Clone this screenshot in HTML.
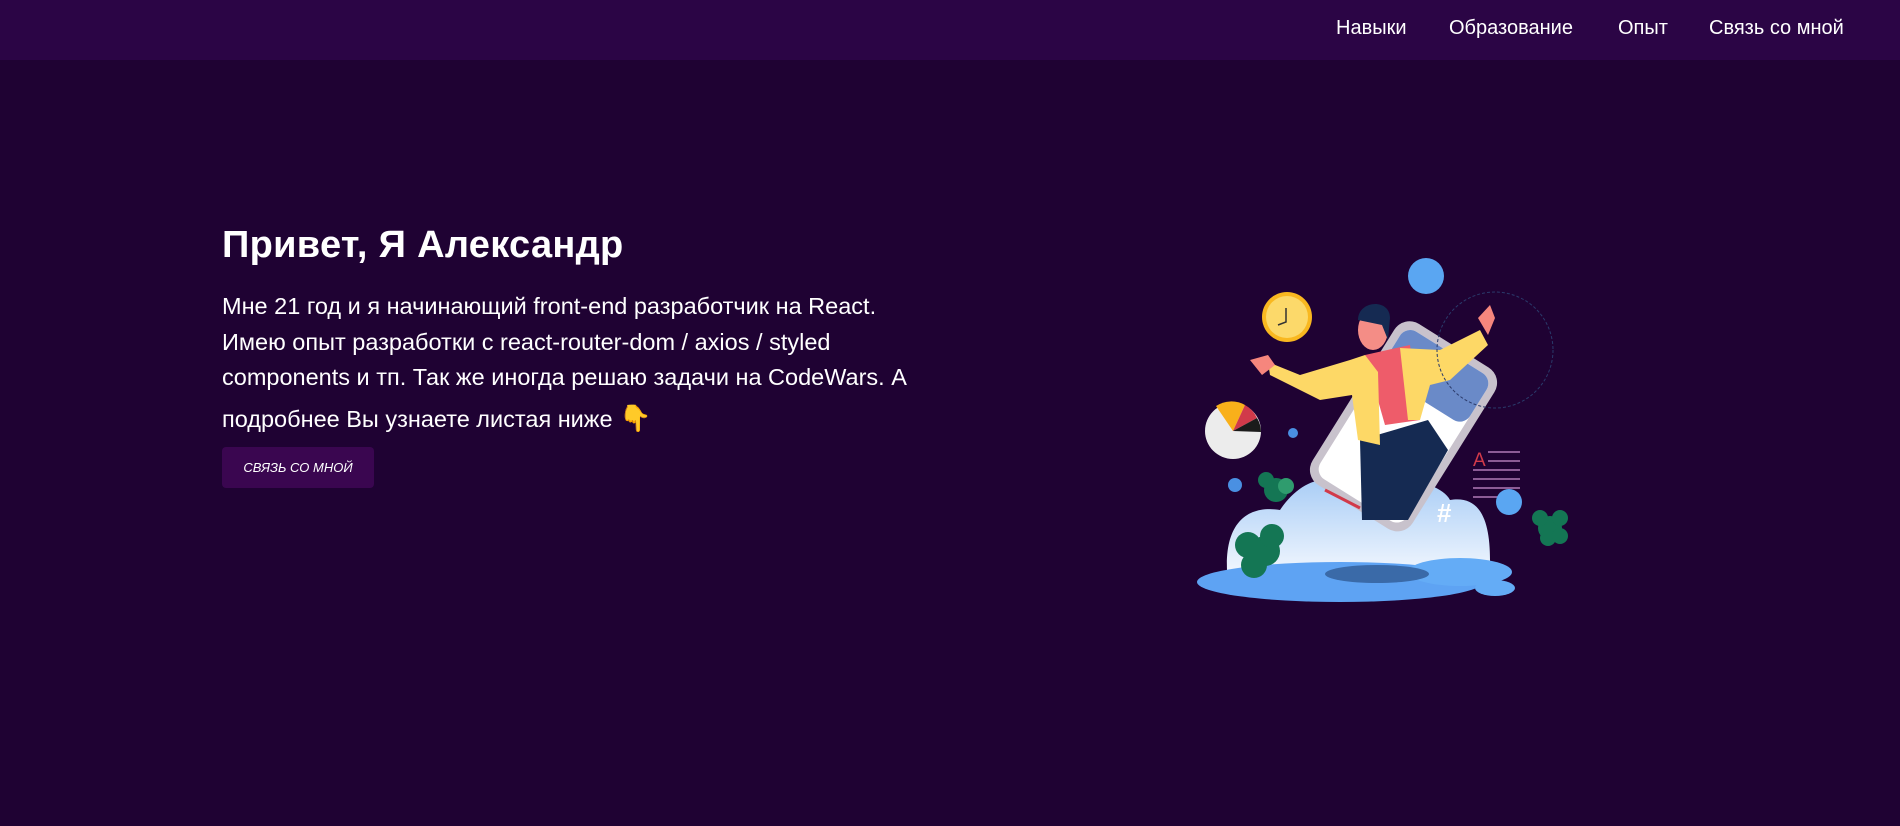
<!DOCTYPE html>
<html><head><meta charset="utf-8"><style>
html,body{margin:0;padding:0;}
body{width:1900px;height:826px;background:#1f0233;font-family:"Liberation Sans","DejaVu Sans",sans-serif;color:#fff;position:relative;overflow:hidden;}
.nav{position:absolute;left:0;top:0;width:1900px;height:60px;background:#2b0545;}
.nav span{position:absolute;top:17px;font-size:20px;color:#fff;}
h1{position:absolute;left:222px;top:224px;margin:0;font-size:38px;font-weight:bold;letter-spacing:0.3px;}
p{position:absolute;left:222px;top:289px;margin:0;width:760px;font-size:23.5px;line-height:35.5px;white-space:nowrap;}
.btn{position:absolute;left:222px;top:447px;width:152px;height:41px;background:#3a0650;border-radius:4px;font-size:13px;line-height:41px;text-align:center;font-style:italic;}
svg{position:absolute;left:0;top:0;}
</style></head><body>
<div class="nav">
<span style="left:1336px">Навыки</span>
<span style="left:1449px">Образование</span>
<span style="left:1618px">Опыт</span>
<span style="left:1709px">Связь со мной</span>
</div>
<h1>Привет, Я Александр</h1>
<p>Мне 21 год и я начинающий front-end разработчик на React.<br>Имею опыт разработки с react-router-dom / axios / styled<br>components и тп. Так же иногда решаю задачи на CodeWars. А<br><span style="line-height:44px">подробнее Вы узнаете листая ниже <span style="color:#f5b90c;font-size:26px">👇</span></span></p>
<div class="btn">СВЯЗЬ СО МНОЙ</div>
<svg width="1900" height="826" viewBox="0 0 1900 826">
<defs><linearGradient id="cl" x1="0" y1="0" x2="0" y2="1"><stop offset="0" stop-color="#a9cdf6"/><stop offset="1" stop-color="#f2f7fe"/></linearGradient></defs>
<circle cx="1426" cy="276" r="18" fill="#5aa6f2"/>
<circle cx="1287" cy="317" r="25" fill="#f9b820"/><circle cx="1287" cy="317" r="21" fill="#fcd96a"/>
<path d="M1286 308 L1286 322 L1278 325" stroke="#333" stroke-width="1.5" fill="none"/>
<circle cx="1233" cy="431" r="28" fill="#ececec"/>
<path d="M1233 431 L1216 406 A28 28 0 0 1 1245 405Z" fill="#f9b01a"/>
<path d="M1233 431 L1245 405 A28 28 0 0 1 1257 418Z" fill="#d13a4a"/>
<path d="M1233 431 L1257 418 A28 28 0 0 1 1261 432Z" fill="#1b1b1b"/>
<circle cx="1293" cy="433" r="5" fill="#4a90e2"/>
<circle cx="1235" cy="485" r="7" fill="#4a90e2"/>
<circle cx="1311" cy="512" r="8" fill="#2c6fd1"/>
<path d="M1227 570 C1225 520 1250 505 1280 510 C1300 480 1330 470 1350 490 C1380 470 1440 480 1450 500 C1480 495 1490 520 1490 560 L1490 575 L1227 575Z" fill="url(#cl)"/>
<ellipse cx="1340" cy="582" rx="143" ry="20" fill="#5ea3f3"/>
<ellipse cx="1460" cy="572" rx="52" ry="14" fill="#64acf6"/>
<ellipse cx="1495" cy="588" rx="20" ry="8" fill="#64acf6"/>
<ellipse cx="1377" cy="574" rx="52" ry="9" fill="#3a6aa8"/>
<g transform="rotate(32 1400 430)"><rect x="1342" y="330" width="118" height="190" rx="18" fill="#c8c2cc"/><rect x="1350" y="338" width="102" height="174" rx="12" fill="#fff"/><rect x="1350" y="338" width="102" height="55" rx="12" fill="#6a8ac8"/></g>
<path d="M1360 508 L1325 490" stroke="#d13a4a" stroke-width="3"/>
<path d="M1360 440 L1362 520 L1408 520 L1448 450 L1428 420 Z" fill="#152a52"/>
<path d="M1365 355 L1410 345 L1420 420 L1385 425Z" fill="#ee5c6a"/>
<path d="M1268 362 L1300 375 L1350 360 L1365 355 L1378 372 L1380 445 L1358 440 L1352 395 L1320 400 L1270 375Z" fill="#fdd866"/>
<path d="M1400 348 L1440 350 L1480 330 L1488 345 L1450 380 L1430 385 L1420 420 L1408 420Z" fill="#fdd866"/>
<path d="M1250 360 L1268 355 L1275 365 L1262 375Z" fill="#f6867d"/>
<path d="M1478 318 L1490 305 L1495 318 L1488 335Z" fill="#f6867d"/>
<ellipse cx="1373" cy="330" rx="15" ry="20" fill="#f48d86"/>
<path d="M1358 320 C1358 300 1390 298 1390 318 L1388 340 L1382 325 Z" fill="#152a52"/>
<g fill="#147654"><circle cx="1265" cy="551" r="15"/><circle cx="1248" cy="545" r="13"/><circle cx="1254" cy="565" r="13"/><circle cx="1272" cy="536" r="12"/>
<circle cx="1276" cy="490" r="12"/><circle cx="1266" cy="480" r="8"/><circle cx="1286" cy="486" r="8" fill="#2f9c6e"/>
<circle cx="1550" cy="528" r="12"/><circle cx="1540" cy="518" r="8"/><circle cx="1560" cy="518" r="8"/><circle cx="1548" cy="538" r="8"/><circle cx="1560" cy="536" r="8"/></g>
<text x="1473" y="466" font-size="19" fill="#d13a4a" font-family="Liberation Sans">A</text>
<g stroke="#b07ab8" stroke-width="1.5"><line x1="1488" y1="452" x2="1520" y2="452"/><line x1="1488" y1="461" x2="1520" y2="461"/><line x1="1473" y1="470" x2="1520" y2="470"/><line x1="1473" y1="479" x2="1520" y2="479"/><line x1="1473" y1="488" x2="1520" y2="488"/><line x1="1473" y1="497" x2="1520" y2="497"/></g>
<circle cx="1509" cy="502" r="13" fill="#5aa6f2"/>
<text x="1437" y="522" font-size="26" font-weight="bold" fill="#fff" font-family="Liberation Sans">#</text>
<circle cx="1495" cy="350" r="58" fill="none" stroke="#2a3a6a" stroke-width="1" stroke-dasharray="3 2"/>
</svg>
</body></html>
